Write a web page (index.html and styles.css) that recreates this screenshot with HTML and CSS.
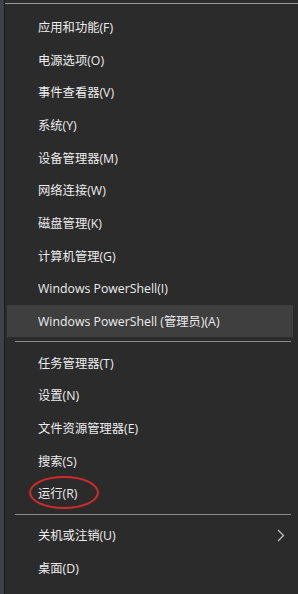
FILE: index.html
```html
<!DOCTYPE html>
<html lang="zh-CN">
<head>
<meta charset="utf-8">
<title>Win+X 菜单</title>
<link rel="stylesheet" href="styles.css">
</head>
<body>
<div class="frame">
  <div class="topline"></div>
  <ul class="menu">
    <li class="item">应用和功能(F)</li>
    <li class="item">电源选项(O)</li>
    <li class="item">事件查看器(V)</li>
    <li class="item">系统(Y)</li>
    <li class="item">设备管理器(M)</li>
    <li class="item">网络连接(W)</li>
    <li class="item">磁盘管理(K)</li>
    <li class="item">计算机管理(G)</li>
    <li class="item">Windows PowerShell(I)</li>
    <li class="item active">Windows PowerShell (管理员)(A)</li>
    <li class="sep"></li>
    <li class="item">任务管理器(T)</li>
    <li class="item">设置(N)</li>
    <li class="item">文件资源管理器(E)</li>
    <li class="item">搜索(S)</li>
    <li class="item run">运行(R)<span class="circle"></span></li>
    <li class="sep"></li>
    <li class="item sub">关机或注销(U)
      <svg class="chev" width="8" height="13" viewBox="0 0 8 13"><path d="M1 1 L6.5 6.5 L1 12" fill="none" stroke="#bdbdbd" stroke-width="1.3"/></svg>
    </li>
    <li class="item">桌面(D)</li>
  </ul>
</div>
</body>
</html>
```
FILE: styles.css
```css
html, body {
  margin: 0;
  padding: 0;
  background: #2b2b2b;
}
.frame {
  width: 298px;
  height: 594px;
  box-sizing: border-box;
  background: #2b2b2b;
  border-left: 4px solid #3e4247;
  position: relative;
  overflow: hidden;
  font-family: "Open Sans", "Noto Sans CJK SC", sans-serif;
  font-size: 12.3px;
  color: #ececec;
}
.frame::before {
  content: "";
  position: absolute;
  left: 0;
  top: 0;
  bottom: 0;
  width: 1px;
  background: #1c1c1c;
}
.topline {
  height: 3px;
  background: #2d2d2d;
  border-bottom: 1px solid #9a9a9a;
}
.menu {
  list-style: none;
  margin: 0;
  padding: 6.5px 0 0 0;
}
.item {
  height: 32.7px;
  display: flex;
  align-items: center;
  padding-left: 31px;
  margin-left: 3px;
  margin-right: 5px;
  position: relative;
  white-space: nowrap;
}
.item.active {
  background: #3f3f3f;
}
.sep {
  height: 9px;
  display: flex;
  align-items: center;
  padding: 0 7px 0 11px;
}
.sep::after {
  content: "";
  display: block;
  flex: 1;
  height: 1px;
  background: #8a8a8a;
}
.item.sub {
  justify-content: space-between;
  padding-right: 8px;
}
.chev {
  display: block;
}
.circle {
  position: absolute;
  left: 22px;
  top: -1px;
  width: 66px;
  height: 29px;
  border: 2px solid #d42a2a;
  border-radius: 50%;
}
```
